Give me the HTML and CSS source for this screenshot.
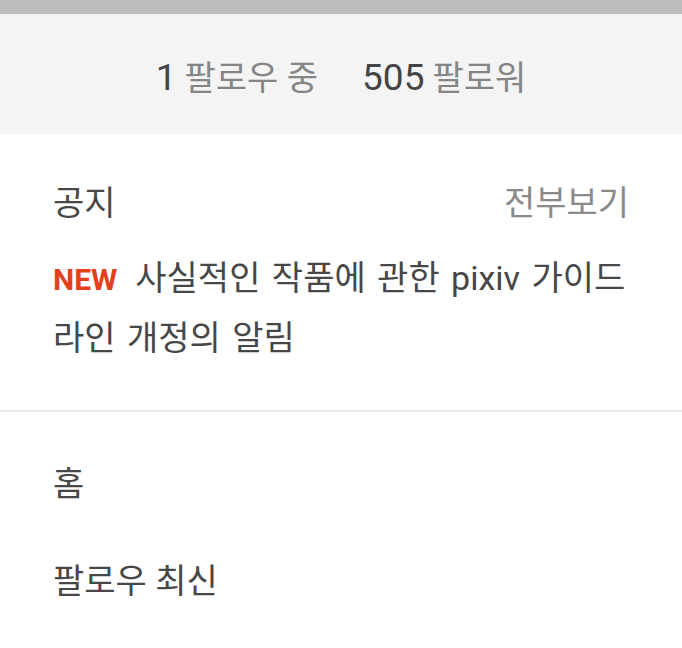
FILE: index.html
```html
<!DOCTYPE html>
<html lang="ko">
<head>
<meta charset="utf-8">
<link rel="stylesheet" href="styles.css">
</head>
<body>
<div class="topbar"></div>
<section class="stats">
  <div class="stat"><span class="num">1</span> <span class="label">팔로우 중</span></div>
  <div class="stat"><span class="num">505</span> <span class="label">팔로워</span></div>
</section>
<section class="notice">
  <div class="notice-head">
    <span class="title">공지</span>
    <span class="more">전부보기</span>
  </div>
  <p class="notice-body"><span class="new">NEW</span>사실적인 작품에 관한 pixiv 가이드라인 개정의 알림</p>
</section>
<nav class="menu">
  <div class="menu-item">홈</div>
  <div class="menu-item">팔로우 최신</div>
</nav>
</body>
</html>
```
FILE: styles.css
```css
html, body {
  margin: 0;
  padding: 0;
  background: #ffffff;
}
body {
  font-family: Roboto, "Noto Sans CJK KR", sans-serif;
  color: #474747;
  width: 682px;
  height: 648px;
  overflow: hidden;
}
.topbar {
  height: 14px;
  background: #bdbdbd;
}
.stats {
  height: 120px;
  background: #f4f4f4;
  display: flex;
  justify-content: center;
  align-items: center;
  gap: 44px;
  padding-top: 14px;
  box-sizing: border-box;
}
.stat {
  line-height: 44px;
  white-space: nowrap;
}
.num {
  font-size: 37px;
  color: #444444;
}
.label {
  font-size: 34px;
  color: #858585;
  margin-left: 4px;
}
.notice {
  padding: 45px 53px 42px;
  border-bottom: 2px solid #ebebeb;
}
.notice-head {
  display: flex;
  justify-content: space-between;
  align-items: center;
  font-size: 34px;
  line-height: 48px;
}
.more {
  color: #8a8a8a;
}
.notice-body {
  margin: 22px 0 0;
  font-size: 34px;
  line-height: 59px;
  word-spacing: 3px;
}
.new {
  font-weight: 700;
  font-size: 30px;
  color: #e3401d;
  margin-right: 18px;
}
.menu {
  padding-top: 24px;
}
.menu-item {
  padding: 0 53px;
  font-size: 34px;
  line-height: 97px;
}
```
